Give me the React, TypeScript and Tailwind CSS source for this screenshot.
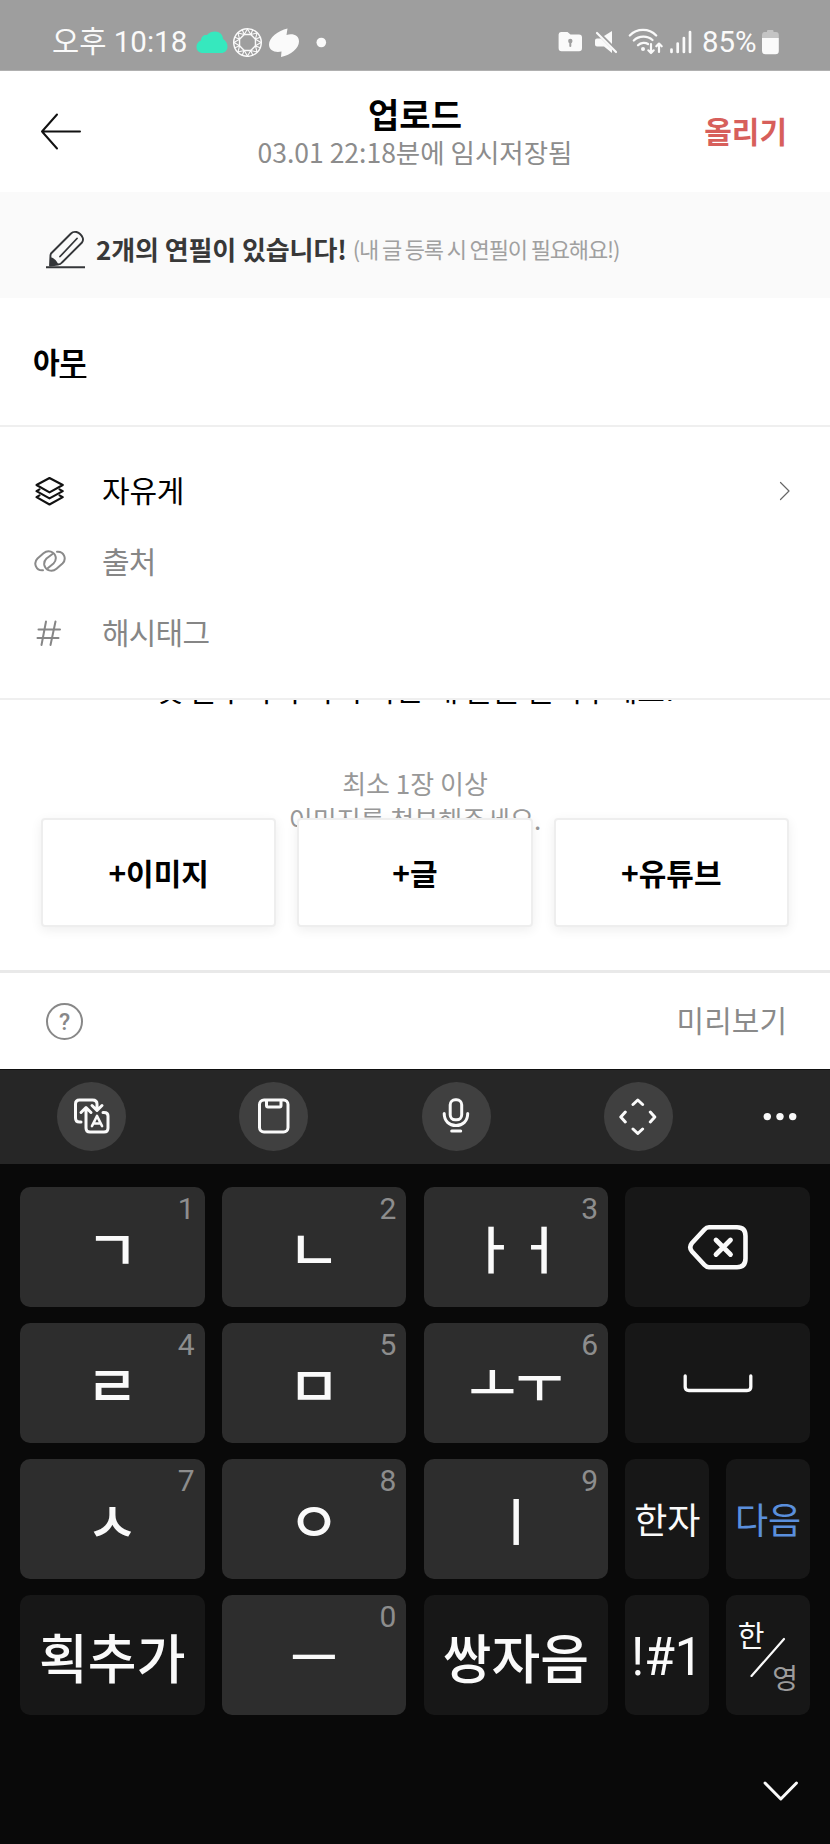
import React from "react";

const KR = "font-['Noto_Sans_CJK_KR',sans-serif]";
const RB = "font-['Roboto','Noto_Sans_CJK_KR',sans-serif]";

type GlyphProps = {
  x: number;
  y: number;
  w: number;
  h: number;
  className?: string;
  children: React.ReactNode;
};

/* Icon drawn in screen units; x/y is the origin of its own coordinate window. */
function Glyph({ x, y, w, h, className = "", children }: GlyphProps) {
  return (
    <svg
      width={w}
      height={h}
      viewBox={`${x} ${y} ${w} ${h}`}
      fill="none"
      strokeLinecap="round"
      strokeLinejoin="round"
      className={`shrink-0 ${className}`}
    >
      {children}
    </svg>
  );
}

const facets = Array.from({ length: 8 }, (_, i) => (i * Math.PI) / 4 + Math.PI / 8);
const pt = (r: number, a: number) =>
  `${(247.5 + r * Math.cos(a)).toFixed(2)} ${(42.5 + r * Math.sin(a)).toFixed(2)}`;

function StatusBar() {
  return (
    <div className="flex h-[71px] shrink-0 items-center border-b border-[#b0b0b0] bg-[#9e9e9e] pt-[13px] text-[#fafafa]">
      <div className={`ml-[52px] w-[144px] text-[30px] leading-[30px] whitespace-nowrap ${RB}`}>
        <span className="inline-block origin-left scale-x-[0.985]">오후 10:18</span>
      </div>
      <Glyph x={196} y={27} w={132} h={30}>
        <path
          d="M203 53C199 53 196.500 50.500 196.500 47C196.500 43.500 199 41 201 40.500C201 36.500 204 34.500 207 35C209 32.500 212 31.500 215 31.500C219.500 31.500 223 34.500 223 39C225.500 40.500 227.500 43 227.500 46.500C227.500 50.500 225 53 221 53Z"
          fill="#36e8be"
        />
        <g stroke="#fafafa" strokeWidth="1.1">
          <circle cx="247.5" cy="42.5" r="13.8" strokeWidth="1.5" />
          <path d={`M${facets.map((a) => pt(8.6, a)).join("L")}Z`} strokeWidth="1.4" />
          {facets.map((a) => (
            <path
              key={a}
              d={`M${pt(13.5, a)}L${pt(8.6, a)}M${pt(8.6, a)}L${pt(13.5, a + Math.PI / 8)}L${pt(8.6, a + Math.PI / 4)}`}
            />
          ))}
        </g>
        <path
          d="M287.500 28.500C278 31 269 37.500 269 44.500C269 50.500 275 53 281.500 51.500L281 57C291 55 299 48 299 41.500C299 35.500 293 33 286.500 35Z"
          fill="#fafafa"
        />
        <circle cx="321.3" cy="42.5" r="4.8" fill="#fafafa" />
      </Glyph>
      <Glyph x={558} y={27} w={135} h={30} className="ml-auto">
        <path
          d="M561 32H567.500L570.500 34.500H579Q582 34.500 582 37.500V48Q582 51.200 579 51.200H561.500Q558.600 51.200 558.600 48V34.500Q558.600 32 561 32Z"
          fill="#fafafa"
        />
        <path d="M570.300 41.500V46" stroke="#9e9e9e" strokeWidth="2" />
        <circle cx="570.3" cy="41" r="2.2" fill="#9e9e9e" />
        <path d="M604 36L612 31V44Z" fill="#fafafa" />
        <path d="M597 38.500H601L612 49.500V53L604 46.500H597Q595 46.500 595 44.500V40.500Q595 38.500 597 38.500Z" fill="#fafafa" />
        <path d="M597 33L616 52" stroke="#fafafa" strokeWidth="2.2" />
        <g stroke="#fafafa" strokeWidth="2.3">
          <path d="M629.800 35.500C637 28 649 28 656.200 35.500" />
          <path d="M633.800 40.500C639 35.500 647.500 35.500 652.500 40" />
          <path d="M638 45.300C641 42.300 645.500 42.300 648 44" />
          <path d="M651 44V52.500M648.300 50.300L651 53L653.700 50.300" strokeWidth="2.2" />
          <path d="M659 52V44M656.300 46.300L659 43.600L661.700 46.300" strokeWidth="2.2" />
          <path d="M671.500 49.500V52M677.700 43.500V52M683.900 38V52M690 32V52" strokeWidth="2.7" />
        </g>
        <circle cx="643" cy="49" r="2" fill="#fafafa" />
      </Glyph>
      <div className={`ml-[9px] w-[60px] text-[30px] leading-[30px] whitespace-nowrap ${RB}`}>
        <span className="inline-block origin-left scale-x-[0.98]">85%</span>
      </div>
      <Glyph x={762} y={27} w={18} h={30} className="mr-[50px]">
        <path d="M767 32V31Q767 30 768 30H772.500Q773.500 30 773.500 31V32H776Q778.800 32 778.800 35V38H762V35Q762 32 764.500 32Z" fill="#c4c4c4" />
        <path d="M762 38H778.800V51Q778.800 54.300 775.500 54.300H765.500Q762 54.300 762 51Z" fill="#fafafa" />
      </Glyph>
    </div>
  );
}

function Header() {
  return (
    <header className="flex h-[121px] shrink-0 items-center bg-white">
      <div className="w-[200px] pl-[40px]">
        <Glyph x={40} y={112} w={42} h={39}>
          <path d="M80 131.500H42M57 114.500L42 131.500L57 148.500" stroke="#111" strokeWidth="2" />
        </Glyph>
      </div>
      <div className="flex flex-1 flex-col items-center whitespace-nowrap">
        <h1 className={`text-[34px] leading-[40px] font-bold text-black ${KR}`}>업로드</h1>
        <p className={`pb-px text-[26.5px] leading-[35px] font-normal text-[#8c8c8c] ${KR}`}>03.01 22:18분에 임시저장됨</p>
      </div>
      <div className="flex w-[200px] justify-end pr-[43px] pb-[4px]">
        <span className={`text-[30px] leading-[40px] font-bold text-[#d75f5b] ${KR}`}>올리기</span>
      </div>
    </header>
  );
}

function PencilBanner() {
  return (
    <div className={`flex h-[106px] shrink-0 items-center bg-[#fafafa] pt-[9px] pl-[45px] whitespace-nowrap ${KR}`}>
      <Glyph x={45} y={231} w={41} h={39}>
        <path
          d="M51 254.500L71 234.500Q73 232.300 76.500 233Q81 234.500 82.800 239Q83.500 241.500 82 243.500L62 263.500Q60.500 265.300 58 265.500L50 266.500L50.500 256Z"
          stroke="#343639"
          strokeWidth="1.9"
        />
        <path d="M60 257.500L77 239.500" stroke="#343639" strokeWidth="1.8" />
        <path d="M50.200 258Q53 258.500 55.500 261Q57.500 263.500 58.500 265.500L50 266.800Z" fill="#343639" />
        <path d="M46 268.300H85" stroke="#343639" strokeWidth="2" strokeLinecap="butt" />
      </Glyph>
      <span className="-mt-px ml-[10px] text-[26px] leading-[40px] font-bold tracking-[-0.1px] text-[#383838]">2개의 연필이 있습니다!</span>
      <span className="-mt-[4px] ml-[6px] text-[22px] leading-[40px] font-normal tracking-[-1.15px] text-[#a0a0a0]">(내 글 등록 시 연필이 필요해요!)</span>
    </div>
  );
}

function OptionRows() {
  return (
    <section className={`flex h-[273px] shrink-0 flex-col border-b-2 border-[#efefef] pt-[28px] text-[30px] ${KR}`}>
      <div className="flex h-[71px] items-center pl-[34px]">
        <Glyph x={34} y={476} w={32} h={30}>
          <g stroke="#111" strokeWidth="2.1">
            <path d="M36.500 485L49.500 478L62.800 485L49.500 492.400Z" />
            <path d="M39.500 489.300L36.500 491.200L49.500 498.400L62.800 491.200L59.500 489.300" />
            <path d="M39.500 495.300L36.500 497.200L49.500 504.500L62.800 497.200L59.500 495.300" />
          </g>
        </Glyph>
        <span className="-mt-[3px] ml-[36px] tracking-[-0.2px] text-black">자유게</span>
        <Glyph x={779} y={481} w={12} h={20} className="mr-[39px] ml-auto">
          <path d="M780.500 482.500L789 491L780.500 499.500" stroke="#666" strokeWidth="1.2" />
        </Glyph>
      </div>
      <div className="flex h-[71px] items-center pl-[34px]">
        <Glyph x={34} y={547} w={32} h={30}>
          <g stroke="#8a8a8a" strokeWidth="2">
            <path d="M43 570.300C36 571 33 563 37.500 558.500L43.500 553.300C48 549.500 54.500 551.500 55.700 557C56.200 560 55 562 53.500 563.500L48 568" />
            <path d="M57 551.700C64 551 67 559 62.500 563.500L56.500 568.700C52 572.500 45.500 570.500 44.300 565C43.800 562 45 560 46.500 558.500L52.500 554" />
          </g>
        </Glyph>
        <span className="-mt-[3px] ml-[36px] tracking-[-0.8px] text-[#868686]">출처</span>
      </div>
      <div className="flex h-[71px] items-center pl-[34px]">
        <Glyph x={34} y={617} w={32} h={30}>
          <path d="M46 620.500L41.500 644M55.500 620.500L50.500 644M38.500 628.500H60M37.500 637H58.500" stroke="#868686" strokeWidth="2" />
        </Glyph>
        <span className="-mt-[3px] ml-[36px] tracking-[-0.8px] text-[#868686]">해시태그</span>
      </div>
    </section>
  );
}

function Editor() {
  return (
    <section className={`flex h-[270px] shrink-0 flex-col overflow-hidden ${KR}`}>
      <p className="-mt-[34px] h-[44px] shrink-0 text-center text-[30px] leading-[44px] whitespace-nowrap text-black">
        첫 문구까지 다시 하는 내 글을 올려주세요!
      </p>
      <div className="mt-[55px] h-[72px] shrink-0 text-center text-[26px] leading-[36px] font-normal text-[#989898]">
        <p>최소 1장 이상</p>
        <p>이미지를 첨부해주세요.</p>
      </div>
      <div className="relative -mt-[19px] grid h-[109px] shrink-0 grid-cols-3 gap-[21px] px-[41px]">
        {["+이미지", "+글", "+유튜브"].map((label) => (
          <button
            key={label}
            className="flex items-center justify-center rounded-[4px] border-2 border-[#eeeeee] bg-white pb-[1px] text-[30px] leading-[40px] font-bold text-black shadow-[0_3px_12px_rgba(0,0,0,0.07)]"
          >
            {label}
          </button>
        ))}
      </div>
    </section>
  );
}

function BottomBar() {
  return (
    <div className="flex h-[99px] shrink-0 items-center justify-between border-t-[3px] border-[#e9e9e9] bg-white pr-[43px] pl-[46px]">
      <div className={`flex size-[37px] items-center justify-center rounded-full border-2 border-[#888] pt-[2px] text-[23px] leading-none font-medium text-[#888] ${RB}`}>
        ?
      </div>
      <span className={`-mt-[5px] text-[30px] leading-[40px] font-normal text-[#8a8a8a] ${KR}`}>미리보기</span>
    </div>
  );
}

function RoundTool({ children }: { children: React.ReactNode }) {
  return <div className="flex size-[69px] shrink-0 items-center justify-center rounded-full bg-[#404040]">{children}</div>;
}

function SuggestionBar() {
  return (
    <div className="flex h-[95px] shrink-0 items-center gap-[113.300px] border-t border-[#111] bg-[#262626] pb-[2px] pl-[57px]">
      <RoundTool>
        <Glyph x={72.500} y={1097} w={38} h={38}>
          <g stroke="#fafafa" strokeWidth="3">
            <path d="M80.500 1122H79Q75 1122 75 1118V1104Q75 1100 79 1100H92Q96.500 1100 96.500 1104V1109.500M91.500 1105.500L96.500 1110.500L101.500 1105.500" />
            <path d="M80.500 1112.500L85.500 1107.500L90.500 1112.500M85.500 1108.500V1128Q85.500 1132 89.500 1132H103.500Q107.500 1132 107.500 1128V1116Q107.500 1112.500 103.500 1112.500H102.500" />
            <path d="M91.500 1126L96.500 1116L101.500 1126M93.500 1123.500H99.500" strokeWidth="2.700" />
          </g>
        </Glyph>
      </RoundTool>
      <RoundTool>
        <Glyph x={254.500} y={1097} w={38} h={38}>
          <g stroke="#fafafa" strokeWidth="3">
            <rect x="259" y="1100" width="28.500" height="32" rx="4.500" />
            <path d="M266 1100.500V1105.500Q266 1107 267.500 1107H279Q280.500 1107 280.500 1105.500V1100.500" />
          </g>
        </Glyph>
      </RoundTool>
      <RoundTool>
        <Glyph x={437.300} y={1097} w={38} h={38}>
          <g stroke="#fafafa" strokeWidth="3">
            <rect x="450.500" y="1099.800" width="11.500" height="20" rx="5" />
            <path d="M444.500 1113.500C444.500 1121 449.500 1125.500 456.300 1125.500C463 1125.500 468 1121 468 1113.500M452 1131H461" />
          </g>
        </Glyph>
      </RoundTool>
      <RoundTool>
        <Glyph x={619.500} y={1097} w={38} h={38}>
          <path
            d="M633.500 1104.500L638.300 1100L643.100 1104.500M633.500 1129L638.300 1133.500L643.100 1129M625.800 1112L621.300 1117L625.800 1122M650.800 1112L655.300 1117L650.800 1122"
            stroke="#fafafa"
            strokeWidth="3"
          />
        </Glyph>
      </RoundTool>
      <Glyph x={763} y={1112} w={34} h={10} className="-ml-[23px]">
        <circle cx="767.3" cy="1117.600" r="3.700" fill="#fafafa" />
        <circle cx="780" cy="1117.600" r="3.700" fill="#fafafa" />
        <circle cx="792.7" cy="1117.600" r="3.700" fill="#fafafa" />
      </Glyph>
    </div>
  );
}

type KeyProps = { digit?: string; dark?: boolean; className?: string; children: React.ReactNode };

function Key({ digit, dark = false, className = "", children }: KeyProps) {
  return (
    <div
      className={`relative flex items-center justify-center overflow-hidden rounded-[10px] whitespace-nowrap text-[#fafafa] ${
        dark ? "bg-[#171717]" : "bg-[#2d2d2d]"
      } ${KR} ${className}`}
    >
      {digit && (
        <span className="absolute top-[7px] right-[10px] font-['Roboto',sans-serif] text-[30px] leading-[30px] font-normal text-[#8d8d8d]">
          {digit}
        </span>
      )}
      {children}
    </div>
  );
}

function Consonant({ children }: { children: React.ReactNode }) {
  return <span className="-mt-[2px] text-[57px] leading-[60px] font-medium">{children}</span>;
}

function Vowel({ children }: { children: React.ReactNode }) {
  return <span className="text-[51px] leading-[60px] font-medium">{children}</span>;
}

function Keyboard() {
  return (
    <div className="flex flex-1 flex-col bg-[#090909] px-[20px] pt-[23px]">
      <div className="grid auto-rows-[120px] grid-cols-4 gap-x-[17.300px] gap-y-[16px]">
        <Key digit="1"><Consonant>ㄱ</Consonant></Key>
        <Key digit="2"><Consonant>ㄴ</Consonant></Key>
        <Key digit="3"><Vowel>ㅏㅓ</Vowel></Key>
        <Key dark>
          <Glyph x={687} y={1224} w={62} h={46}>
            <g stroke="#fafafa" strokeWidth="4.600">
              <path d="M709 1227.300H737Q745.500 1227.300 745.500 1236V1258.500Q745.500 1267.200 737 1267.200H709Q706.500 1267.200 704.500 1265L692 1251.500Q688.500 1247.300 692 1243L704.500 1229.500Q706.500 1227.300 709 1227.300Z" />
              <path d="M716 1240L730.500 1254.500M730.500 1240L716 1254.500" strokeWidth="4.800" />
            </g>
          </Glyph>
        </Key>

        <Key digit="4"><Consonant>ㄹ</Consonant></Key>
        <Key digit="5"><Consonant>ㅁ</Consonant></Key>
        <Key digit="6" className="pb-[5px]"><Vowel>ㅗㅜ</Vowel></Key>
        <Key dark>
          <Glyph x={683} y={1373} w={70} h={21}>
            <path d="M685.200 1376V1387Q685.200 1390.500 689 1390.500H747Q750.800 1390.500 750.800 1387V1376" stroke="#fafafa" strokeWidth="3.300" />
          </Glyph>
        </Key>

        <Key digit="7"><Consonant>ㅅ</Consonant></Key>
        <Key digit="8"><Consonant>ㅇ</Consonant></Key>
        <Key digit="9"><Vowel>ㅣ</Vowel></Key>
        <div className="grid grid-cols-2 gap-x-[17px]">
          <Key dark className="pb-[2px] text-[36px]">한자</Key>
          <Key dark className="pb-[2px] text-[36px]">
            <span className="text-[#5a8fdc]">다음</span>
          </Key>
        </div>

        <Key dark className="pt-[3px] text-[53px] font-medium">획추가</Key>
        <Key digit="0"><Vowel>ㅡ</Vowel></Key>
        <Key dark className="pt-[3px] text-[53px] font-medium">쌍자음</Key>
        <div className="grid grid-cols-2 gap-x-[17px]">
          <Key dark>
            <span className="mt-[3px] inline-block scale-x-[0.94] font-['Roboto',sans-serif] text-[53px] leading-[60px]">!#1</span>
          </Key>
          <Key dark className="flex-col">
            <span className="mr-[34px] text-[29px] leading-[30px]">한</span>
            <Glyph x={750} y={1635} w={38} h={40} className="-mt-[12px] -mb-[15px]">
              <path d="M752.500 1674L785 1637" stroke="#fafafa" strokeWidth="2.200" />
            </Glyph>
            <span className="ml-[34px] text-[28px] leading-[30px] text-[#9c9c9c]">영</span>
          </Key>
        </div>
      </div>
      <div className="mt-[64px] flex justify-end pr-[10px]">
        <Glyph x={762} y={1779} w={38} h={25}>
          <path d="M765 1783L780.800 1799L796.500 1783" stroke="#fafafa" strokeWidth="3" />
        </Glyph>
      </div>
    </div>
  );
}

export default function App() {
  return (
    <main className="flex h-[1844px] w-[830px] flex-col overflow-hidden bg-white">
      <StatusBar />
      <Header />
      <PencilBanner />
      <div className={`flex h-[129px] shrink-0 items-center border-b-2 border-[#efefef] pb-[2px] pl-[33px] ${KR}`}>
        <span className="text-[29px] leading-[40px] font-bold text-black">
          아<span className="underline decoration-2 underline-offset-[2px]">무</span>
        </span>
      </div>
      <OptionRows />
      <Editor />
      <BottomBar />
      <SuggestionBar />
      <Keyboard />
    </main>
  );
}
